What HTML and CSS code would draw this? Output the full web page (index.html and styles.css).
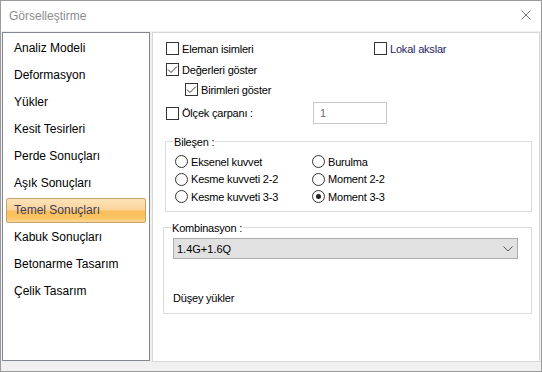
FILE: index.html
```html
<!DOCTYPE html>
<html lang="tr">
<head>
    <meta charset="UTF-8">
    <title>Görselleştirme</title>
    <link rel="stylesheet" href="styles.css">
</head>
<body>

    <div class="window">
        <div class="titlebar">
            <span class="title">Görselleştirme</span>
            <svg class="close" width="10" height="10" viewBox="0 0 10 10">
                <path d="M0.5 0.5 L9.5 9.5 M9.5 0.5 L0.5 9.5" stroke="#777" stroke-width="1" fill="none"/>
            </svg>
        </div>

        <div class="content">
            <ul class="nav">
                <li>Analiz Modeli</li>
                <li>Deformasyon</li>
                <li>Yükler</li>
                <li>Kesit Tesirleri</li>
                <li>Perde Sonuçları</li>
                <li>Aşık Sonuçları</li>
                <li class="active">Temel Sonuçları</li>
                <li>Kabuk Sonuçları</li>
                <li>Betonarme Tasarım</li>
                <li>Çelik Tasarım</li>
            </ul>

            <div class="panel">
                <div class="row">
                    <label class="check wide"><span class="box"></span>Eleman isimleri</label>
                    <label class="check blue"><span class="box"></span>Lokal akslar</label>
                </div>
                <div class="row second">
                    <label class="check"><span class="box"><svg width="11" height="11" viewBox="0 0 11 11"><path d="M1 5.5 L4 8.5 L10 2.5" stroke="#333" stroke-width="1" fill="none"/></svg></span>Değerleri göster</label>
                </div>
                <div class="row third">
                    <label class="check"><span class="box"><svg width="11" height="11" viewBox="0 0 11 11"><path d="M1 5.5 L4 8.5 L10 2.5" stroke="#333" stroke-width="1" fill="none"/></svg></span>Birimleri göster</label>
                </div>
                <div class="row scale">
                    <label class="check scale-label"><span class="box"></span>Ölçek çarpanı :</label>
                    <div class="num">1</div>
                </div>

                <div class="group components">
                    <div class="group-title">Bileşen :</div>
                    <div class="radios">
                        <label class="radio"><span class="dot"></span>Eksenel kuvvet</label>
                        <label class="radio"><span class="dot"></span>Burulma</label>
                        <label class="radio"><span class="dot"></span>Kesme kuvveti 2-2</label>
                        <label class="radio"><span class="dot"></span>Moment 2-2</label>
                        <label class="radio"><span class="dot"></span>Kesme kuvveti 3-3</label>
                        <label class="radio"><span class="dot on"></span>Moment 3-3</label>
                    </div>
                </div>

                <div class="group combos">
                    <div class="group-title">Kombinasyon :</div>
                    <div class="select">
                        <span>1.4G+1.6Q</span>
                        <svg width="10" height="6" viewBox="0 0 10 6">
                            <path d="M0.5 0.5 L5 5 L9.5 0.5" stroke="#555" stroke-width="1" fill="none"/>
                        </svg>
                    </div>
                    <div class="note">Düşey yükler</div>
                </div>
            </div>
        </div>
    </div>

</body>
</html>
```

FILE: styles.css
```css
/* Dialog frame */
body {
    margin: 0;
    font-family: 'Liberation Sans', Arial, sans-serif;
}

.window {
    width: 542px;
    height: 372px;
    border: 1px solid #9a9a9a;
    box-sizing: border-box;
    background-color: #f0f0f0;
}

.titlebar {
    height: 30px;
    background-color: #fff;
    display: flex;
    align-items: center;
    justify-content: space-between;
    padding: 0 10px 0 8px;
}

.title {
    font-size: 12px;
    color: #8c8c8c;
}

.close {
    margin-bottom: 2px;
}

.content {
    display: flex;
    gap: 2px;
    padding: 1px 1px 0 1px;
}

/* Left list */
.nav {
    width: 148px;
    height: 329px;
    margin: 0;
    padding: 2px 0 0;
    list-style: none;
    border: 1px solid #828790;
    background-color: #fff;
    box-sizing: border-box;
}

.nav li {
    height: 27px;
    line-height: 27px;
    padding-left: 11px;
    font-size: 12px;
    color: #000;
}

.nav li.active {
    height: 25px;
    line-height: 23px;
    margin: 1px 3px;
    padding-left: 7px;
    border: 1px solid #c6a46e;
    border-radius: 2px;
    box-sizing: border-box;
    color: #3d3d5c;
    background: linear-gradient(to bottom, #fde3b9 0%, #fbd49d 45%, #f9bd5a 55%, #fbc766 85%, #fddb9c 100%);
}

/* Right panel */
.panel {
    width: 388px;
    height: 330px;
    padding: 9px 7px 0 10px;
    border: 1px solid #d6d6d6;
    background-color: #fff;
    box-sizing: border-box;
    font-size: 11px;
    color: #000;
}

.row {
    display: flex;
    align-items: center;
    height: 13px;
    padding-left: 3px;
}

.row.second {
    margin-top: 8px;
}

.row.third {
    margin-top: 7px;
    padding-left: 22px;
}

.row.scale {
    margin-top: 6px;
    height: 22px;
}

.check {
    display: flex;
    align-items: center;
    gap: 3px;
    letter-spacing: -0.2px;
}

.check.wide {
    width: 208px;
}

.check.blue {
    color: #1e2466;
}

.scale-label {
    width: 147px;
}

.box {
    width: 13px;
    height: 13px;
    border: 1px solid #333;
    box-sizing: border-box;
    display: flex;
    background-color: #fff;
}

.num {
    width: 74px;
    height: 22px;
    border: 1px solid #c9c9c9;
    box-sizing: border-box;
    padding-left: 6px;
    display: flex;
    align-items: center;
    color: #6d6d6d;
}

/* Group boxes */
.group {
    border: 1px solid #dcdcdc;
    box-sizing: border-box;
}

.group-title {
    width: fit-content;
    margin: -6px 0 0 7px;
    padding: 0 1px;
    line-height: 13px;
    background-color: #fff;
    letter-spacing: -0.2px;
}

.components {
    margin: 17px 0 0 2px;
    height: 71px;
}

.radios {
    display: grid;
    grid-template-columns: 137px auto;
    grid-auto-rows: 17.5px;
    margin: 4px 0 0 9px;
}

.radio {
    display: flex;
    align-items: center;
    gap: 3px;
    letter-spacing: -0.2px;
}

.dot {
    width: 13px;
    height: 13px;
    border: 1px solid #333;
    border-radius: 50%;
    box-sizing: border-box;
    display: flex;
    align-items: center;
    justify-content: center;
}

.dot.on::after {
    content: '';
    width: 5px;
    height: 5px;
    border-radius: 50%;
    background-color: #222;
}

.combos {
    margin-top: 15px;
    height: 87px;
}

.select {
    width: 345px;
    height: 21px;
    margin: 3px 0 0 9px;
    padding: 0 4px 0 3px;
    border: 1px solid #adadad;
    box-sizing: border-box;
    background-color: #e1e1e1;
    display: flex;
    align-items: center;
    justify-content: space-between;
}

.note {
    margin: 33px 0 0 9px;
    line-height: 13px;
    letter-spacing: -0.2px;
}
```
